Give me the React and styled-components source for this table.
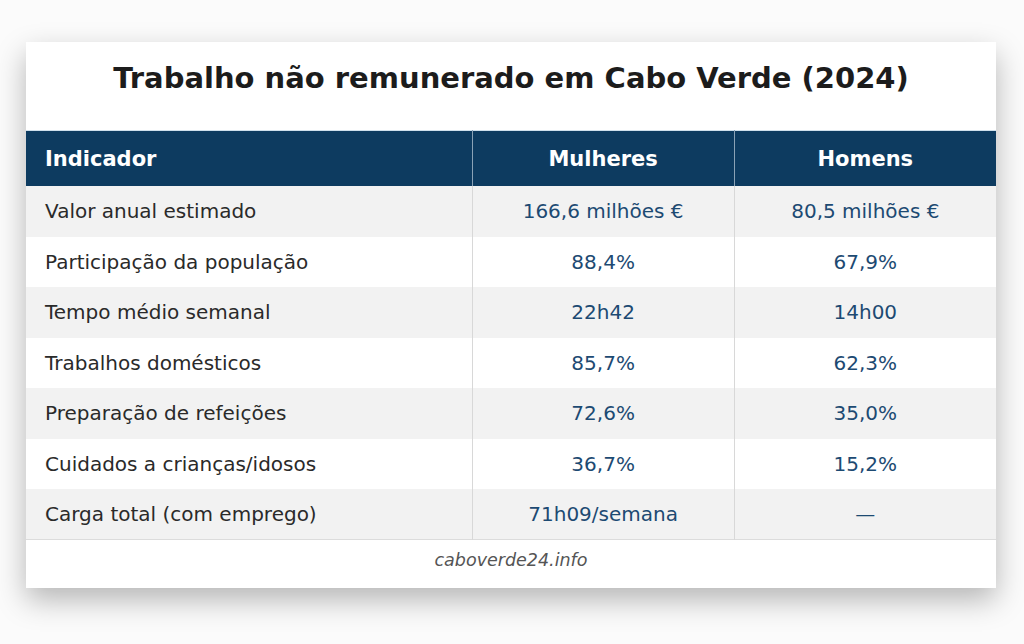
import React from "react";
import styled, { createGlobalStyle } from "styled-components";

const GlobalStyle = createGlobalStyle`
  html, body {
    margin: 0;
    padding: 0;
    background: #fbfbfb;
    font-family: "DejaVu Sans", "Liberation Sans", sans-serif;
  }
`;

const rows = [
  ["Valor anual estimado", "166,6 milhões €", "80,5 milhões €"],
  ["Participação da população", "88,4%", "67,9%"],
  ["Tempo médio semanal", "22h42", "14h00"],
  ["Trabalhos domésticos", "85,7%", "62,3%"],
  ["Preparação de refeições", "72,6%", "35,0%"],
  ["Cuidados a crianças/idosos", "36,7%", "15,2%"],
  ["Carga total (com emprego)", "71h09/semana", "—"],
];

const App = () => {
  return (
    <>
      <GlobalStyle />
      <Page>
        <Card>
          <Title>Trabalho não remunerado em Cabo Verde (2024)</Title>
          <Table>
            <colgroup>
              <col style={{ width: "46%" }} />
              <col style={{ width: "27%" }} />
              <col style={{ width: "27%" }} />
            </colgroup>
            <thead>
              <tr>
                <Th>Indicador</Th>
                <Th $center>Mulheres</Th>
                <Th $center>Homens</Th>
              </tr>
            </thead>
            <tbody>
              {rows.map((r, i) => (
                <Row key={r[0]} $odd={i % 2 === 0}>
                  <Label>{r[0]}</Label>
                  <Value>{r[1]}</Value>
                  <Value>{r[2]}</Value>
                </Row>
              ))}
            </tbody>
          </Table>
          <Source>caboverde24.info</Source>
        </Card>
      </Page>
    </>
  );
};

export default App;

const Page = styled.div`
  padding: 42px 28px 56px 26px;
`;

const Card = styled.div`
  width: 970px;
  background: #fff;
  box-shadow: 0 12px 28px rgba(0, 0, 0, 0.28);
`;

const Title = styled.h1`
  margin: 0;
  height: 88px;
  display: flex;
  align-items: center;
  justify-content: center;
  font-size: 29px;
  font-weight: bold;
  color: #1c1c1c;
  padding-bottom: 16px;
  box-sizing: border-box;
`;

const Table = styled.table`
  width: 100%;
  border-collapse: collapse;
  table-layout: fixed;
  border-top: 1px solid #cfe0ec;
  border-bottom: 1px solid #dcdcdc;
`;

const Th = styled.th`
  background: #0d3b60;
  color: #fff;
  font-size: 21px;
  font-weight: bold;
  height: 55px;
  padding: 0 19px;
  text-align: ${(p) => (p.$center ? "center" : "left")};
  border-left: 1px solid #8aa2b6;
  &:first-child {
    border-left: none;
  }
`;

const Row = styled.tr`
  height: 50.5px;
  background: ${(p) => (p.$odd ? "#f2f2f2" : "#ffffff")};
`;

const Label = styled.td`
  padding: 0 19px;
  font-size: 20px;
  color: #2a2a2a;
`;

const Value = styled.td`
  text-align: center;
  font-size: 20px;
  color: #1d4a72;
  border-left: 1px solid #d8d8d8;
`;

const Source = styled.div`
  height: 48px;
  display: flex;
  align-items: center;
  justify-content: center;
  font-size: 17.5px;
  font-style: italic;
  color: #555;
  padding-bottom: 8px;
  box-sizing: border-box;
`;
